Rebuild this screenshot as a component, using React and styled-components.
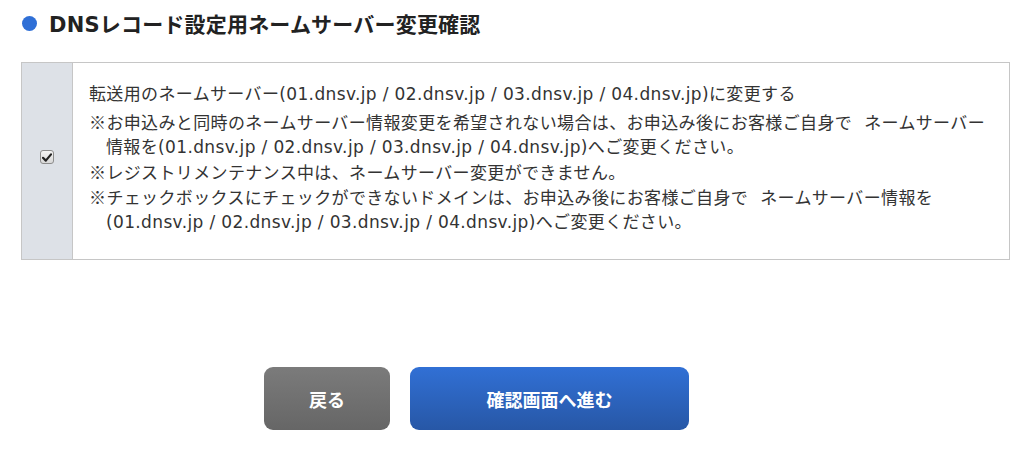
import React from "react";
import styled, { createGlobalStyle } from "styled-components";

const Global = createGlobalStyle`
  html, body { margin: 0; padding: 0; background: #fff; }
  body {
    font-family: "DejaVu Sans", "Noto Sans CJK JP", sans-serif;
    color: #333;
  }
`;

const Page = styled.div`
  width: 1024px;
  height: 454px;
  box-sizing: border-box;
  padding: 8px 14px 0 21px;
  overflow: hidden;
`;

const Heading = styled.h2`
  display: flex;
  align-items: center;
  gap: 12px;
  margin: 0;
  height: 30px;
  font-family: "DejaVu Sans", "Noto Sans CJK JP", sans-serif;
  font-size: 21px;
  font-weight: 700;
  color: #222;
  letter-spacing: 0.2px;
`;

const Dot = styled.span`
  width: 15px;
  height: 15px;
  margin-left: 1px;
  border-radius: 50%;
  background: #2f6fd6;
  flex: none;
`;

const Table = styled.div`
  margin-top: 24px;
  display: flex;
  border: 1px solid #c6c6c6;
  width: 989px;
  height: 198px;
  box-sizing: border-box;
`;

const CheckCell = styled.div`
  width: 51px;
  flex: none;
  background: #dde1e7;
  border-right: 1px solid #c6c6c6;
  display: flex;
  align-items: center;
  justify-content: center;
  padding-bottom: 8px;
  box-sizing: border-box;
`;

const Check = styled.span`
  width: 14px;
  height: 14px;
  box-sizing: border-box;
  border: 1px solid #8d8d8d;
  border-radius: 3px;
  background: linear-gradient(#f4f4f4, #d8d8d8);
  display: flex;
  align-items: center;
  justify-content: center;
`;

const Body = styled.div`
  padding: 19px 8px 0 16px;
  font-size: 17px;
  line-height: 24px;
  letter-spacing: 0.36px;
  color: #333;
  white-space: nowrap;
`;

const Lead = styled.p`
  margin: 0 0 4px;
`;

const Notes = styled.ul`
  list-style: none;
  margin: 0;
  padding: 0;
  line-height: 23.8px;
`;

const Note = styled.li`
  padding-left: 17px;
  text-indent: -17px;
`;

const Mark = styled.span`
  font-family: "Noto Sans CJK JP", sans-serif;
`;

const WideSpace = styled.span`
  display: inline-block;
  width: 12px;
`;

const Buttons = styled.div`
  display: flex;
  gap: 20px;
  margin: 107px 0 0 243px;
`;

const Button = styled.button`
  height: 63px;
  width: ${(p) => p.$w}px;
  border: none;
  border-radius: 9px;
  color: #fff;
  font-family: "Noto Sans CJK JP", sans-serif;
  font-size: 18px;
  font-weight: 700;
  background: ${(p) =>
    p.$primary
      ? "linear-gradient(#3170d5, #2757a6)"
      : "linear-gradient(#7b7b7b, #666666)"};
  cursor: pointer;
`;

export default function App() {
  return (
    <>
      <Global />
      <Page>
        <Heading>
          <Dot />
          DNSレコード設定用ネームサーバー変更確認
        </Heading>
        <Table>
          <CheckCell>
            <Check>
              <svg width="10" height="9" viewBox="0 0 10 9">
                <path d="M1 4.8 L3.8 7.6 L9 1.4" stroke="#222" strokeWidth="2.2" fill="none" strokeLinecap="round" strokeLinejoin="round" />
              </svg>
            </Check>
          </CheckCell>
          <Body>
            <Lead>転送用のネームサーバー(01.dnsv.jp / 02.dnsv.jp / 03.dnsv.jp / 04.dnsv.jp)に変更する</Lead>
            <Notes>
              <Note>
                <Mark>※</Mark>お申込みと同時のネームサーバー情報変更を希望されない場合は、お申込み後にお客様ご自身で<WideSpace />ネームサーバー
                <br />
                情報を(01.dnsv.jp / 02.dnsv.jp / 03.dnsv.jp / 04.dnsv.jp)へご変更ください。
              </Note>
              <Note><Mark>※</Mark>レジストリメンテナンス中は、ネームサーバー変更ができません。</Note>
              <Note>
                <Mark>※</Mark>チェックボックスにチェックができないドメインは、お申込み後にお客様ご自身で<WideSpace />ネームサーバー情報を
                <br />
                (01.dnsv.jp / 02.dnsv.jp / 03.dnsv.jp / 04.dnsv.jp)へご変更ください。
              </Note>
            </Notes>
          </Body>
        </Table>
        <Buttons>
          <Button $w={126}>戻る</Button>
          <Button $w={279} $primary>確認画面へ進む</Button>
        </Buttons>
      </Page>
    </>
  );
}
